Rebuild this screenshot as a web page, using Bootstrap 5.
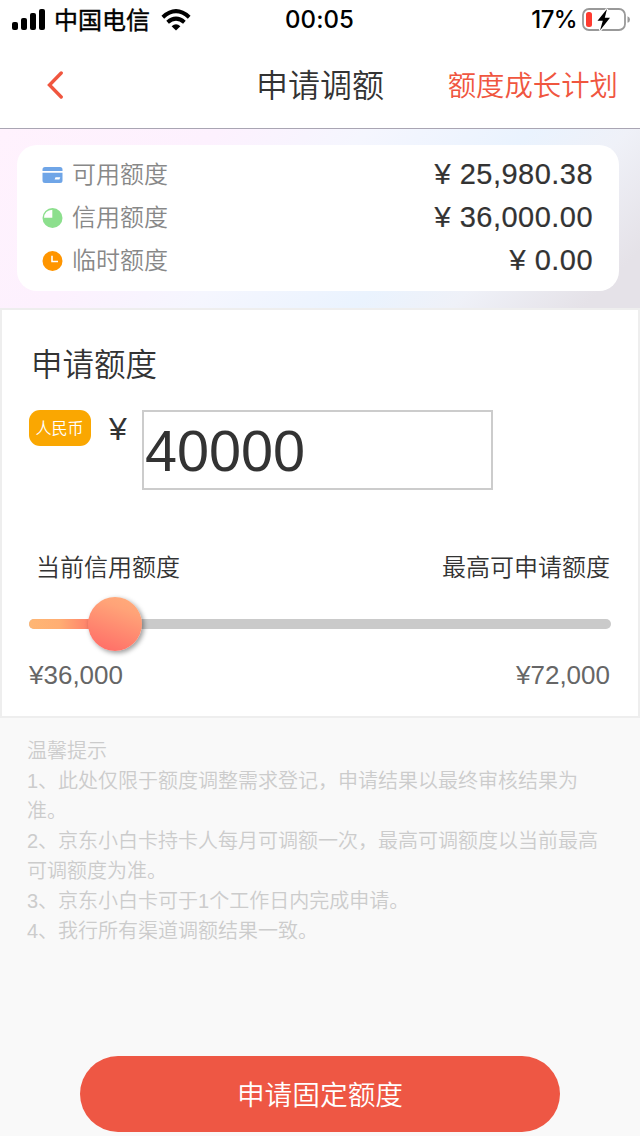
<!DOCTYPE html>
<html lang="zh-CN">
<head>
<meta charset="utf-8">
<meta name="viewport" content="width=device-width, initial-scale=1">
<title>申请调额</title>
<link href="https://cdn.jsdelivr.net/npm/bootstrap@5.3.0/dist/css/bootstrap.min.css" rel="stylesheet">
<style>
body{font-family:"Liberation Sans","Noto Sans CJK SC",sans-serif;font-weight:350;color:#333;background:#f9f9f9;line-height:1;width:640px;height:1136px;overflow:hidden}
svg{display:block;flex:none}
.status{height:40px;color:#000;font:500 24px/40px Inter,"Noto Sans CJK SC",sans-serif;padding:0 10px 0 12px}
.status>div{flex:1 1 0}
.clock{letter-spacing:.1px;margin-right:3px}
.carrier{font-family:"Noto Sans CJK SC",sans-serif;font-weight:400;-webkit-text-stroke:.4px #000;line-height:38px;margin:0 11px 2px 8px}
.pct{letter-spacing:-.6px}
.battery{margin-left:5px}
.topbar{height:89px;border-bottom:1px solid #a9a5b3;padding:2px 22px 0 46px}
.topbar>*{flex:1 1 0}
.topbar>.page-title{flex:none}
.page-title{font-size:32px;line-height:88px;font-weight:350;white-space:nowrap;padding-top:2px}
.plan{font-size:28.4px;line-height:88px;color:#f0563f;white-space:nowrap;margin-left:24px;padding-top:1px}
.hero{height:179px;padding:16px 21px 0 17px;background:linear-gradient(135deg,#fff2fd 0%,#fdf1fe 27%,#f5f6fe 45%,#eaf3fe 65%,#eff1f8 77%,#e5e2e8 93%,#e5e2e8 100%)}
.summary{height:146px;border-radius:20px;padding:8px 26px 0 25px}
.sum-row{height:43px;line-height:43px}
.sum-label{font-size:24px;color:#888;margin-left:9px}
.money{font-size:29px;letter-spacing:.48px;-webkit-text-stroke:.2px #333}
.apply{height:410px;border:2px solid #eee;padding:31px 27px 0}
.apply h2{font-size:31.5px;line-height:48px;font-weight:350;margin:0 0 21px 2px}
.tag{width:62px;height:36px;border-radius:11px;background:#faa701;color:#fff;font-size:16px;line-height:37px;padding-right:1px}
.yen{width:51px;font-size:32px;line-height:38px;padding-left:18px}
.amount{width:351px;height:80px;border:2px solid #ccc;border-radius:0;padding:2px 0 0 1px;font-size:57.6px;line-height:74px;color:#333;background:#fff}
.lbls{font-size:24px;line-height:36px;margin-top:60px;padding:0 1px 0 7px}
.slider{height:10px;border-radius:5px;background:#cacaca;margin-top:33px}
.fill{height:10px;border-radius:5px;background:linear-gradient(90deg,#feb674 0,#ffae73 35%,#ff7569 80%)}
.knob{width:54px;height:54px;right:-27px;top:-22px;background:linear-gradient(20deg,#ff6c67 5%,#ffa378 75%,#ffad7b);box-shadow:2px 2px 5px rgba(0,0,0,.4)}
.range{font-size:26px;line-height:30px;color:#666;margin-top:31px;padding-right:1px}
.notes{padding:18px 38px 0 27px;font-size:20px;line-height:30px;color:#ccc;height:338px}
.notes p{margin:0}
.submit{width:480px;height:76px;background:#ee5744;color:#fff;font-size:27.7px;line-height:79px;font-weight:350}
</style>
</head>
<body>
<div class="bg-white">
  <div class="status d-flex align-items-center">
    <div class="d-flex align-items-center">
      <svg width="34" height="22" viewBox="0 0 34 22"><rect y="13" width="6" height="8" rx="2"/><rect x="9" y="9" width="6" height="12" rx="2"/><rect x="18" y="4" width="6" height="17" rx="2"/><rect x="27" width="6" height="21" rx="2"/></svg>
      <span class="carrier text-nowrap">中国电信</span>
      <svg width="30" height="22" viewBox="0 0 30 22"><g fill="none" stroke="#000" stroke-width="4"><path d="M1.8 8.2Q15-3.8 28.2 8.2"/><path d="M6.6 13.2Q15 6 23.4 13.2"/></g><path d="M10.6 17.2Q15 13.2 19.4 17.2L15 21.6Z"/></svg>
    </div>
    <span class="clock">00:05</span>
    <div class="d-flex align-items-center justify-content-end">
      <span class="pct">17%</span>
      <svg class="battery" width="48" height="24" viewBox="0 0 48 24"><rect x="1" y="1" width="42" height="21" rx="6" fill="none" stroke="#999" stroke-width="1.8"/><path d="M45.5 8.2Q48 9 48 11.5Q48 14 45.5 14.8Z" fill="#999"/><rect x="4" y="4" width="6" height="15" rx="2.5" fill="#ff3b30"/><path d="M25 1L15.5 12.8H20.8L18 22.5L28 9.8H22.8Z" stroke="#fff" stroke-width="2.5" paint-order="stroke"/></svg>
    </div>
  </div>
  <nav class="topbar d-flex align-items-center">
    <div><svg width="20" height="28" viewBox="0 0 20 28"><path d="M15.2 2L3.5 14L15.2 26" fill="none" stroke="#f0563f" stroke-width="3.4" stroke-linecap="round"/></svg></div>
    <h1 class="page-title m-0">申请调额</h1>
    <div class="plan text-end">额度成长计划</div>
  </nav>
</div>
<section class="hero">
  <div class="summary bg-white">
    <div class="sum-row d-flex align-items-center">
      <svg width="21" height="20" viewBox="0 0 21 20"><path d="M3 2H18Q20.5 2 20.5 4.5V6H.5V4.5Q.5 2 3 2ZM.5 7.7H20.5V15.5Q20.5 18 18 18H3Q.5 18 .5 15.5ZM13.5 12.2L12.6 14.6H17.4L18.3 12.2Z" fill="#6fa5e7" fill-rule="evenodd"/></svg>
      <span class="sum-label">可用额度</span><span class="money ms-auto">¥ 25,980.38</span>
    </div>
    <div class="sum-row d-flex align-items-center">
      <svg width="21" height="20" viewBox="0 0 21 20"><circle cx="10.5" cy="10" r="10" fill="#8cdf8d"/><path d="M10.3 1.8V9.8H2Q2.5 2.5 10.3 1.8Z" fill="#fff"/></svg>
      <span class="sum-label">信用额度</span><span class="money ms-auto">¥ 36,000.00</span>
    </div>
    <div class="sum-row d-flex align-items-center">
      <svg width="21" height="20" viewBox="0 0 21 20"><circle cx="10.5" cy="10" r="10" fill="#ff9500"/><path d="M10 4.8V10.5H16" fill="none" stroke="#fff" stroke-width="1.6"/></svg>
      <span class="sum-label">临时额度</span><span class="money ms-auto">¥ 0.00</span>
    </div>
  </div>
</section>
<section class="apply bg-white">
  <h2>申请额度</h2>
  <div class="d-flex align-items-start">
    <span class="tag text-center">人民币</span>
    <span class="yen">¥</span>
    <input class="amount" type="text" value="40000" aria-label="申请额度">
  </div>
  <div class="lbls d-flex justify-content-between"><span>当前信用额度</span><span>最高可申请额度</span></div>
  <div class="slider"><div class="fill position-relative" style="width:14.8%"><div class="knob position-absolute rounded-circle"></div></div></div>
  <div class="range d-flex justify-content-between"><span>¥36,000</span><span>¥72,000</span></div>
</section>
<section class="notes">
  <p>温馨提示</p>
  <p>1、此处仅限于额度调整需求登记，申请结果以最终审核结果为准。</p>
  <p>2、京东小白卡持卡人每月可调额一次，最高可调额度以当前最高可调额度为准。</p>
  <p>3、京东小白卡可于1个工作日内完成申请。</p>
  <p>4、我行所有渠道调额结果一致。</p>
</section>
<button class="submit btn rounded-pill border-0 p-0 d-block mx-auto" type="button">申请固定额度</button>
<script src="https://cdn.jsdelivr.net/npm/bootstrap@5.3.0/dist/js/bootstrap.bundle.min.js"></script>
</body>
</html>
